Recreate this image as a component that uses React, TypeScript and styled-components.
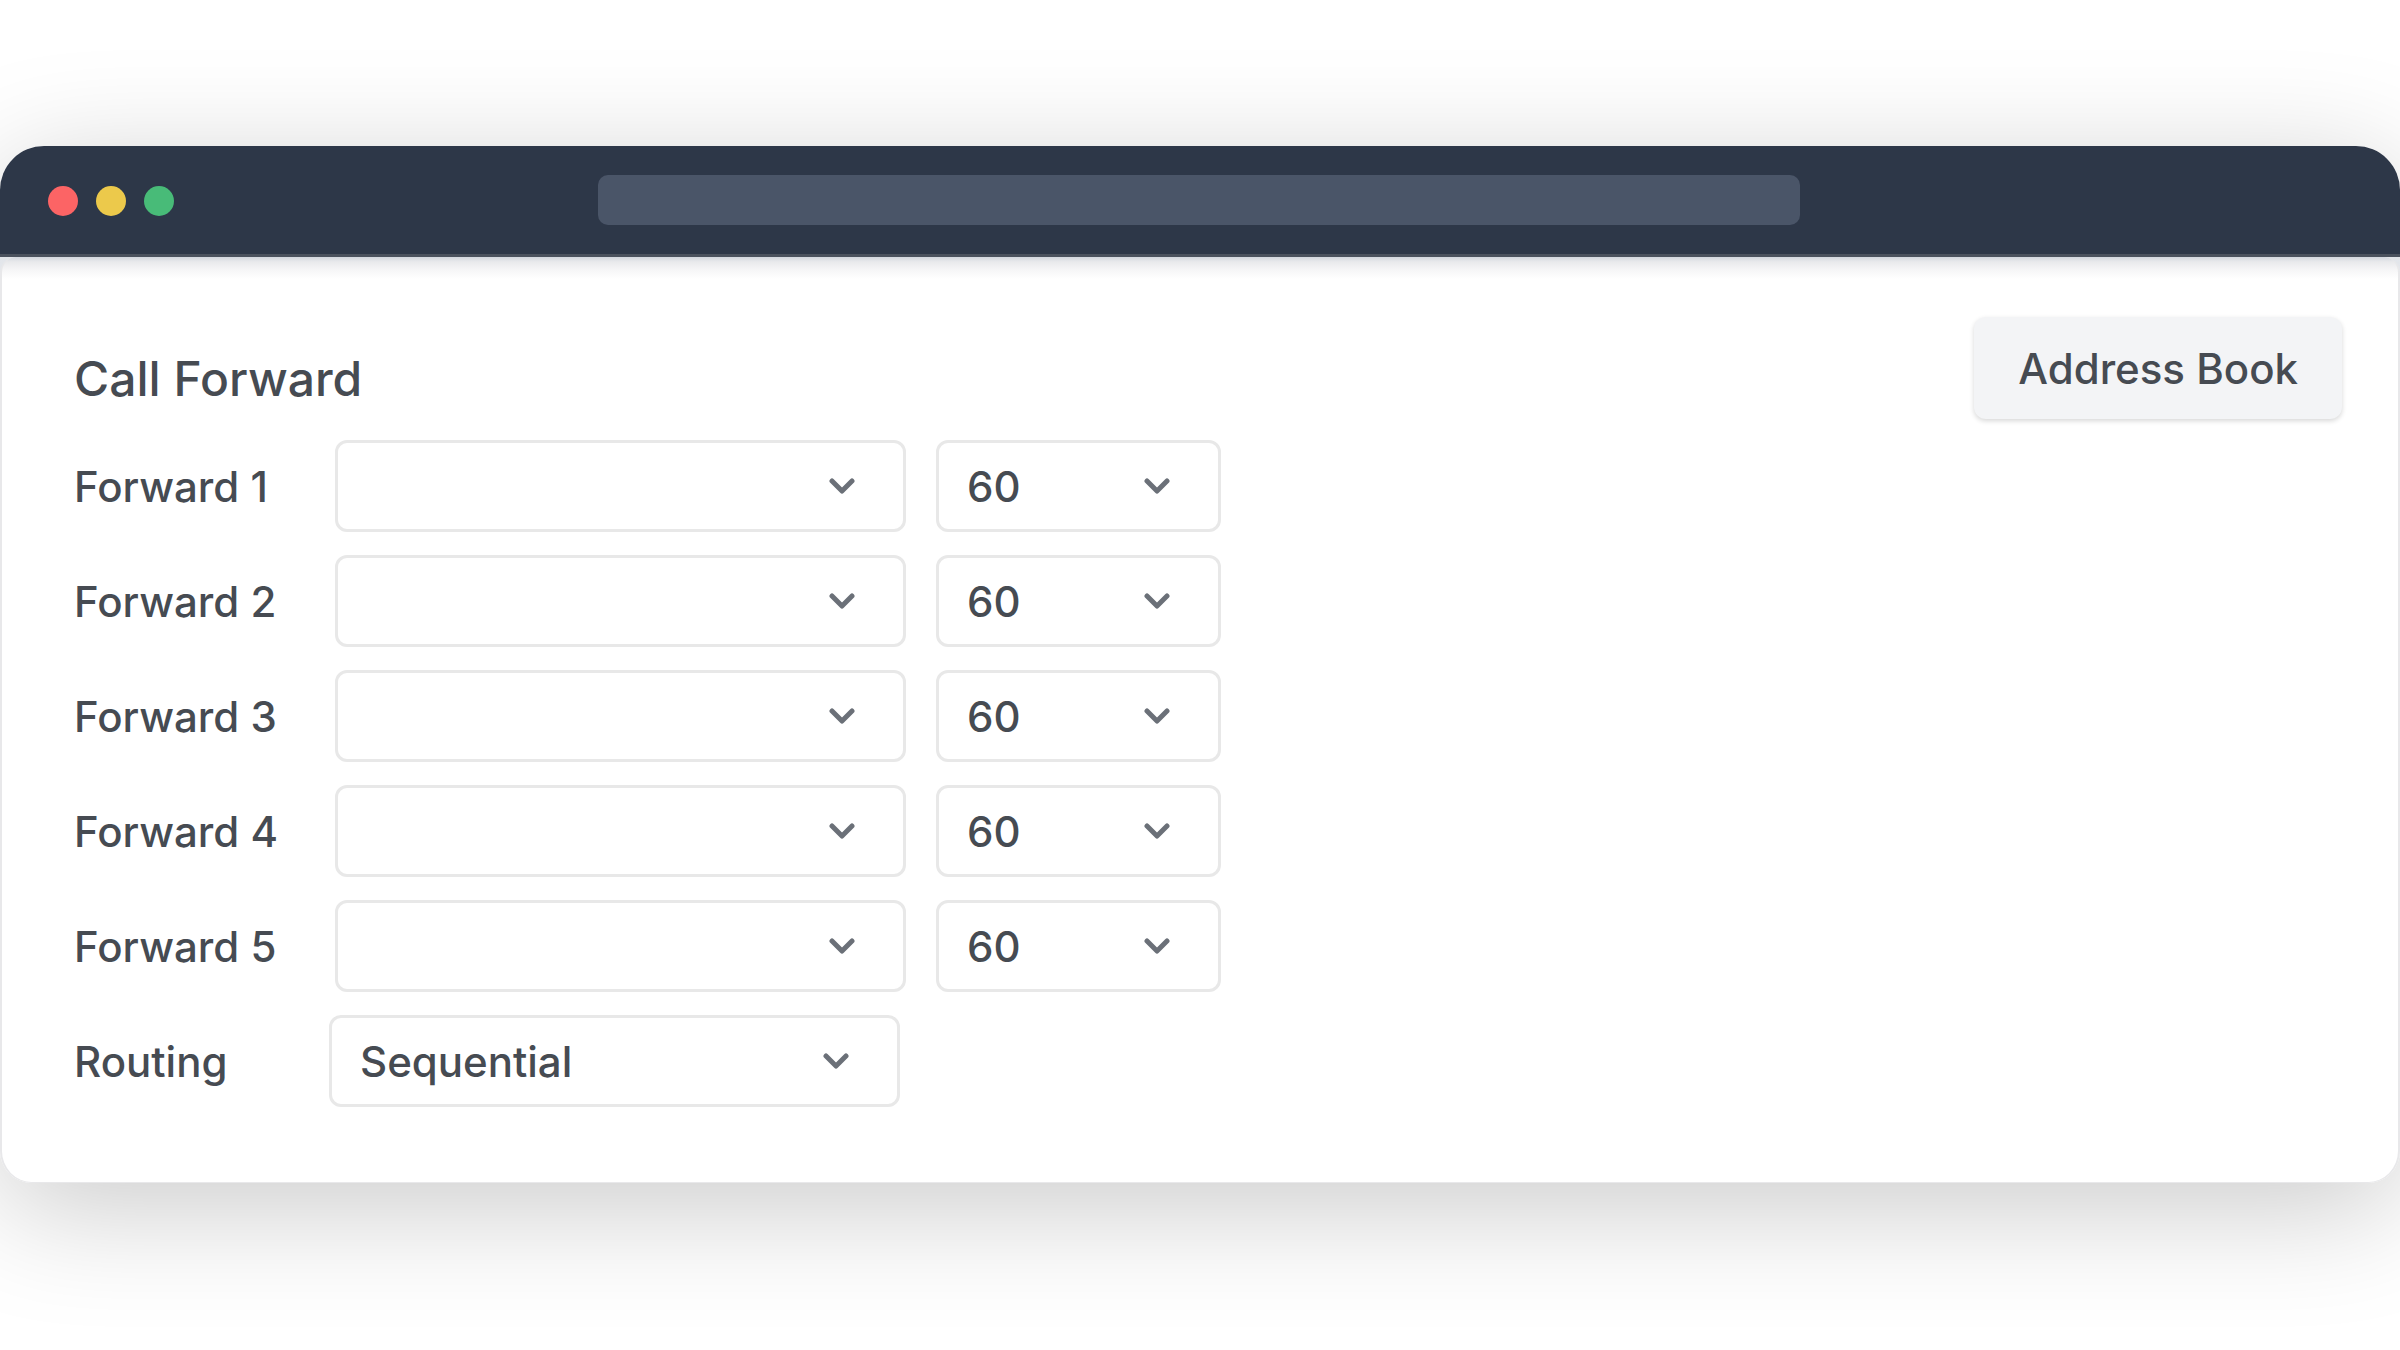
import React from "react";
import styled, { createGlobalStyle } from "styled-components";

const GlobalStyle = createGlobalStyle`
  * { box-sizing: border-box; }
  body {
    margin: 0;
    background: #ffffff;
    color: #464b52;
    font-family: Inter, "Liberation Sans", sans-serif;
    font-weight: 450;
  }
`;

const Page = styled.div`
  min-height: 100vh;
  padding: 146px 0;
  overflow: hidden;
`;

const Window = styled.div`
  border-radius: 44px 44px 32px 32px;
  box-shadow: 0 24px 120px rgba(0, 0, 0, 0.21);
`;

const TitleBar = styled.header`
  display: grid;
  grid-template-columns: 1fr 2fr 1fr;
  align-items: center;
  height: 111px;
  background: #2d3748;
  border-bottom: 3px solid #4b525e;
  border-radius: 44px 44px 0 0;
`;

const Lights = styled.div`
  display: flex;
  gap: 18px;
  padding: 2px 0 0 48px;
`;

const Light = styled.span<{ $color: string }>`
  width: 30px;
  height: 30px;
  border-radius: 50%;
  background: ${(p) => p.$color};
`;

const AddressBar = styled.div`
  height: 50px;
  margin: 0 0 0 -2px;
  border-radius: 10px;
  background: #4a5568;
`;

const Frame = styled.div`
  background: linear-gradient(#e2e5ea, #e9ebef 40px, #f4f4f5);
  border-radius: 0 0 32px 32px;
`;

const Panel = styled.main`
  padding: 60px 56px 75px 72px;
  background: linear-gradient(#d3d7df, #e9eaec 5px, #f6f6f7 13px, #ffffff 22px);
  border: solid #e8e8ea;
  border-width: 0 2px 1px;
  border-radius: 16px 16px 32px 32px;
`;

const PanelHeader = styled.div`
  display: flex;
  align-items: flex-end;
  justify-content: space-between;
  margin-bottom: 21px;
`;

const Title = styled.h1`
  margin: 0;
  font-size: 48px;
  line-height: 80px;
  font-weight: inherit;
`;

const Button = styled.button`
  height: 102px;
  padding: 0 44px;
  border: 0;
  border-radius: 12px;
  background: #f3f4f6;
  box-shadow: 0 2px 5px rgba(0, 0, 0, 0.16);
  color: inherit;
  font: inherit;
  font-size: 42px;
`;

const Form = styled.form`
  display: flex;
  flex-direction: column;
  gap: 23px;
`;

const Row = styled.div`
  display: flex;
  align-items: center;
`;

const Label = styled.label<{ $width: number }>`
  flex: 0 0 ${(p) => p.$width}px;
  padding-top: 2px;
  font-size: 42px;
  line-height: 60px;
`;

const SelectBox = styled.div<{ $width: number }>`
  position: relative;
  width: ${(p) => p.$width}px;
  margin-right: 30px;
`;

const Select = styled.select`
  display: block;
  appearance: none;
  width: 100%;
  height: 92px;
  padding: 0 96px 0 28px;
  border: 3px solid #e8e8e8;
  border-radius: 12px;
  background: #ffffff;
  color: inherit;
  font: inherit;
  font-size: 42px;
`;

const Chevron = styled.svg`
  position: absolute;
  top: 38px;
  right: 51px;
  width: 26px;
  height: 16px;
  fill: none;
  stroke: #6b7078;
  stroke-width: 5;
  stroke-linecap: round;
  stroke-linejoin: round;
  pointer-events: none;
`;

type DropdownProps = {
  id?: string;
  label?: string;
  width: number;
  value: string;
};

function Dropdown({ id, label, width, value }: DropdownProps) {
  return (
    <SelectBox $width={width}>
      <Select id={id} aria-label={label} defaultValue={value}>
        <option value={value}>{value}</option>
      </Select>
      <Chevron viewBox="0 0 26 16" aria-hidden="true">
        <path d="M3 3 L13 13 L23 3" />
      </Chevron>
    </SelectBox>
  );
}

const forwards = [1, 2, 3, 4, 5];

export default function App() {
  return (
    <>
      <GlobalStyle />
      <Page>
        <Window>
          <TitleBar>
            <Lights>
              <Light $color="#fc6465" />
              <Light $color="#ecc94b" />
              <Light $color="#48bb78" />
            </Lights>
            <AddressBar />
          </TitleBar>
          <Frame>
            <Panel>
              <PanelHeader>
                <Title>Call Forward</Title>
                <Button type="button">Address Book</Button>
              </PanelHeader>
              <Form>
                {forwards.map((n) => (
                  <Row key={n}>
                    <Label $width={261} htmlFor={`forward-${n}`}>
                      Forward {n}
                    </Label>
                    <Dropdown id={`forward-${n}`} width={571} value="" />
                    <Dropdown label={`Forward ${n} seconds`} width={285} value="60" />
                  </Row>
                ))}
                <Row>
                  <Label $width={255} htmlFor="routing">
                    Routing
                  </Label>
                  <Dropdown id="routing" width={571} value="Sequential" />
                </Row>
              </Form>
            </Panel>
          </Frame>
        </Window>
      </Page>
    </>
  );
}
